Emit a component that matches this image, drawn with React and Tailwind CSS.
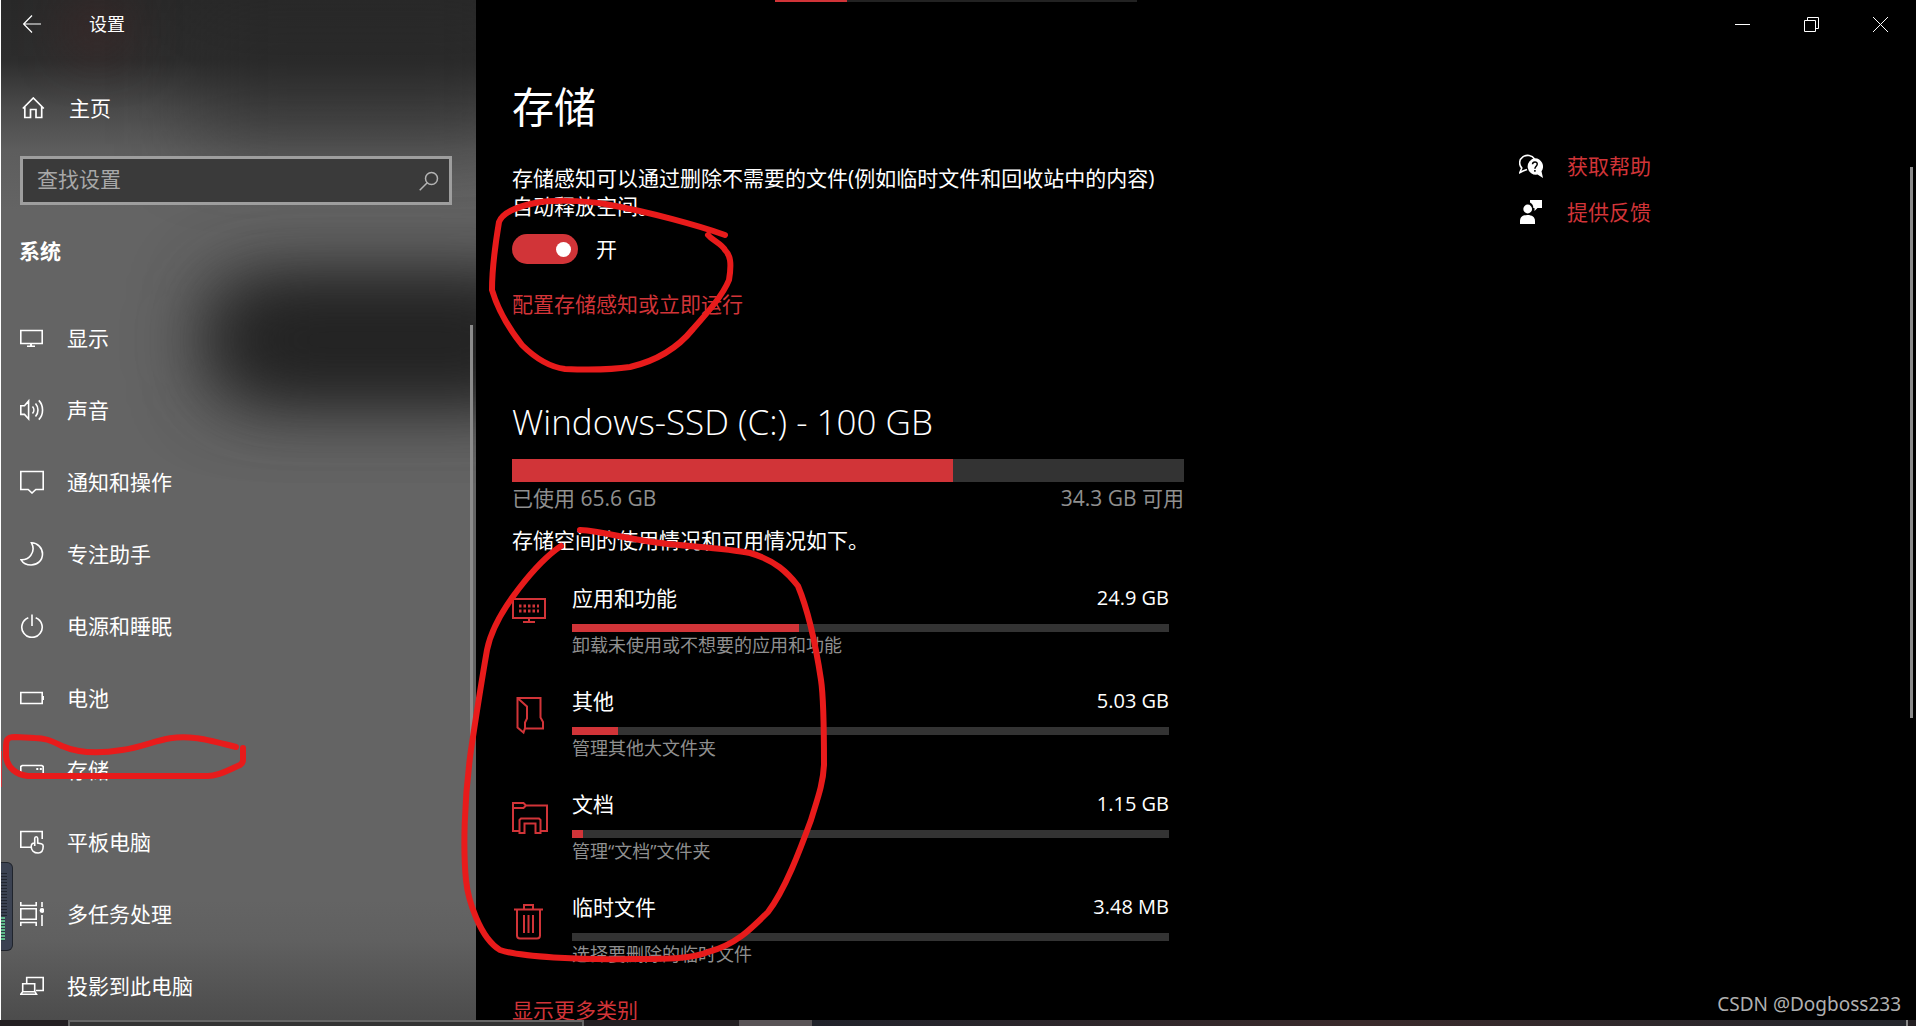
import React from 'react';

const RED = '#d13438';

const NavIcon = ({ children }) => (
  <svg width="24" height="24" viewBox="0 0 24 24" fill="none" stroke="currentColor" strokeWidth="1.6" className="shrink-0" aria-hidden="true">
    {children}
  </svg>
);

const navItems = [
  {
    name: '显示',
    icon: (
      <>
        <path d="M.8 4.500h21.400v13H.8zM7 20.300h8" />
        <path d="M11 17.700v2.600" strokeWidth="2" />
      </>
    ),
  },
  {
    name: '声音',
    icon: <path d="M.8 7.700h3.700L8.600 3v18l-4.100-4.600H.8zM12.500 8.500c1.800 2 1.800 5 0 7M15.500 5.500c3.300 3.600 3.300 9.400 0 13M18.800 2.400c5 5 5 14.200 0 19.200" />,
  },
  { name: '通知和操作', icon: <path d="M.8 1.500h22.400v18h-7.400L12 23l-3.800-3.500H.8z" /> },
  {
    name: '专注助手',
    icon: <path d="M11.500.8c6 .2 11 5 11 11.200 0 6.500-5 11-11.400 11-4.300 0-8-1.800-10-5.200 4.300.2 7.300-1.200 9.600-4.200 2.700-3.600 3-8.600.8-12.800z" />,
  },
  { name: '电源和睡眠', icon: <path d="M12 .5v11.500M8.300 3.700a10.200 10.200 0 1 0 7.400 0" /> },
  {
    name: '电池',
    icon: (
      <>
        <path d="M.8 6.500h21.400v11H.8z" />
        <path d="M23.300 10v4" />
      </>
    ),
  },
  {
    name: '存储',
    icon: (
      <>
        <path d="M.8 17V8.500l1.400-1h19.600l1.400 1V17z" />
        <path d="M16.300 11h2M19.800 11h2" strokeWidth="2" />
      </>
    ),
  },
  {
    name: '平板电脑',
    icon: (
      <>
        <path d="M11 17.300H.8V1.500h21.400V9" />
        <path d="M14.700 16V8.500c0-2.300 3-2.300 3 0V13l3.500.7c1.500.3 2 1 2 2.300 0 4.500-1.700 7-5 7-4.500 0-7-3-7-6.500 0-2.500 1-3.500 3.500-3.500" />
      </>
    ),
  },
  {
    name: '多任务处理',
    icon: (
      <>
        <path d="M.8 0v3.500h15.400V0M.8 6.700h15.400v10.600H.8zM.8 24v-3.500h15.400V24M22 0v5M22 13v11" />
        <circle cx="22" cy="8.500" r="2.400" fill="currentColor" stroke="none" />
      </>
    ),
  },
  {
    name: '投影到此电脑',
    icon: <path d="M6.700 9.500V3.500h16.500v13H16M2.700 9.700h12v8h-12zM.8 20.300l1.800-2.600h12.400l1.500 2.600z" />,
  },
];

const categories = [
  {
    name: '应用和功能',
    size: '24.9 GB',
    hint: '卸载未使用或不想要的应用和功能',
    percent: 38,
    icon: (
      <>
        <path d="M1 5h32v19H1zM11 28h12M17 24v4" />
        <path d="M7 12h20M7 17h20" strokeWidth="3" strokeDasharray="2.500 2" />
      </>
    ),
  },
  {
    name: '其他',
    size: '5.03 GB',
    hint: '管理其他大文件夹',
    percent: 7.7,
    icon: <path d="M5.500 1h23v19.500l2.500 4.500v6.500H13M5.500 1v29.500l6 5 1.500-4.500v-5.500l2-4v-12z" />,
  },
  {
    name: '文档',
    size: '1.15 GB',
    hint: '管理“文档”文件夹',
    percent: 1.9,
    icon: (
      <>
        <path d="M7.500 31H1V3h10.500l2.500 2.500h21V31h-6.500M1 8h10.500L14 5.500" />
        <path d="M7.500 33V20l1.500-1.500h18l1.500 1.500v13h-5V23.500h-11V33z" />
      </>
    ),
  },
  {
    name: '临时文件',
    size: '3.48 MB',
    hint: '选择要删除的临时文件',
    percent: 0,
    icon: <path d="M2 6.500h29M5 6.500v26q0 3 3 3h17q3 0 3-3v-26M12 6V2h9v4M12 12v18M16.500 12v18M21 12v18" />,
  },
];

const Sidebar = () => (
  <aside className="relative w-[476px] shrink-0 overflow-hidden border-l border-white bg-[#636363]">
    {/* Acrylic backdrop */}
    <div className="absolute inset-0 bg-[linear-gradient(#292929_0,#2d2d2d_60px,#4a4a4a_108px,#5d5d5d_150px,#646464_210px,#646464_900px,#606060_940px,#4c4c4c_100%)]" />
    <div className="absolute -right-10 top-0 h-36 w-80 bg-[#262626]/50 blur-2xl" />
    <div className="absolute -right-16 top-[292px] h-24 w-[326px] rounded-3xl bg-[#1c1c1c] blur-2xl" />
    <div className="absolute -right-16 top-[292px] h-24 w-[310px] rounded-3xl bg-[#222] blur-2xl" />
    <div className="absolute left-16 top-0 h-14 w-16 bg-[#4a2525]/40 blur-xl" />

    <div className="relative">
      <header className="flex h-12 items-center pl-[22px]">
        <button type="button" aria-label="返回">
          <svg width="18" height="18" viewBox="0 0 18 18" fill="none" stroke="currentColor" strokeWidth="1.200">
            <path d="M9 .5.7 9 9 17.500M.7 9H18" />
          </svg>
        </button>
        <span className="ml-12 text-lg leading-6">设置</span>
      </header>

      <a href="#home" className="mt-9 flex h-12 items-center gap-6 pl-[21px]">
        <svg width="23" height="22" viewBox="0 0 23 22" fill="none" stroke="currentColor" strokeWidth="1.700" aria-hidden="true">
          <path d="M.8 11.500 11.300 1l10.500 10.500M2.800 9.800v10.700h5.700v-8h5.500v8h5.700V9.800" />
        </svg>
        <span>主页</span>
      </a>

      <label className="ml-[19px] mt-6 flex h-[49px] w-[432px] items-center border-[3px] border-[#9e9e9e] bg-[#3a3a3a] pl-3.5 pr-2.5">
        <input type="text" placeholder="查找设置" aria-label="查找设置" className="min-w-0 flex-1 bg-transparent pb-1 outline-none placeholder:text-[#a8a8a8]" />
        <svg width="20" height="20" viewBox="0 0 20 20" fill="none" stroke="#b4b4b4" strokeWidth="1.500" aria-hidden="true">
          <circle cx="12.500" cy="7.500" r="6" />
          <path d="M8.200 11.800.7 19.300" />
        </svg>
      </label>

      <h2 className="ml-[18px] mt-8 font-bold">系统</h2>

      <nav className="mt-[37px]">
        {navItems.map(item => (
          <a key={item.name} href={`#${item.name}`} className="flex h-[72px] items-center gap-[23px] pl-[19px]">
            <NavIcon>{item.icon}</NavIcon>
            <span>{item.name}</span>
          </a>
        ))}
      </nav>
    </div>

    <div className="absolute left-0 top-[751px] h-9 w-px bg-[#d13438]" />
    <div className="absolute right-[3px] top-[325px] h-[426px] w-[3px] bg-[#8c8c8c]" />

    {/* Floating level meter docked to the screen edge */}
    <div className="absolute left-0 top-[862px] h-[89px] w-3 rounded-r-md border border-l-0 border-[#20242c] bg-[#3b4252]">
      <div className="mt-2.5 h-11 w-1.5 bg-[repeating-linear-gradient(#20252f_0_1px,#3b4252_1px_3px)]" />
      <div className="h-6 w-1 bg-[repeating-linear-gradient(#5fb88a_0_2px,#2c3a44_2px_3px)]" />
    </div>
  </aside>
);

const WindowControls = () => (
  <div className="absolute right-px top-0 flex">
    <button type="button" aria-label="最小化" className="flex h-12 w-[69px] items-center justify-center">
      <svg width="15" height="15" viewBox="0 0 15 15" stroke="currentColor"><path d="M0 7.500h15" /></svg>
    </button>
    <button type="button" aria-label="还原" className="flex h-12 w-[69px] items-center justify-center">
      <svg width="15" height="15" viewBox="0 0 15 15" fill="none" stroke="currentColor"><path d="M.5 3.500h11v11H.5zM3.500 3.500v-3h11v11h-3" /></svg>
    </button>
    <button type="button" aria-label="关闭" className="flex h-12 w-[69px] items-center justify-center">
      <svg width="15" height="15" viewBox="0 0 15 15" stroke="currentColor"><path d="m0 0 15 15M15 0 0 15" /></svg>
    </button>
  </div>
);

const StorageContent = () => (
  <div className="w-[672px] shrink-0">
    <h1 className="text-[42px] leading-[56px]">存储</h1>
    <p className="mt-[29px] max-w-[650px]">
      存储感知可以通过删除不需要的文件(例如临时文件和回收站中的内容)自动释放空间。
    </p>

    <label className="mt-3.5 flex h-[30px] items-center">
      <input type="checkbox" role="switch" defaultChecked className="peer sr-only" />
      <span className="flex h-[30px] w-[66px] items-center justify-end rounded-full bg-[#d13438] pr-[7px]">
        <span className="size-[15px] rounded-full bg-white" />
      </span>
      <span className="ml-[18px]">开</span>
    </label>

    <a href="#configure" className="mt-[26px] block w-fit text-[#d13438]">配置存储感知或立即运行</a>

    <h2 className="mt-20 text-[35px] leading-[48px] font-light">Windows-SSD (C:) - 100 GB</h2>
    <div className="mt-[13px] h-[23px] bg-[#333]">
      <div className="h-full w-[441px] bg-[#d13438]" />
    </div>
    <div className="mt-0.5 flex justify-between text-[#8f8f8f]">
      <span>已使用 65.6 GB</span>
      <span>34.3 GB 可用</span>
    </div>
    <p className="mt-3.5">存储空间的使用情况和可用情况如下。</p>

    <ul className="mt-[30px]">
      {categories.map(item => (
        <li key={item.name} className="flex h-[103px]">
          <svg width="36" height="38" viewBox="0 0 36 38" fill="none" stroke={RED} strokeWidth="2" className="mt-2.5 shrink-0" aria-hidden="true">
            {item.icon}
          </svg>
          <div className="ml-6 mr-[15px] flex-1">
            <div className="flex justify-between">
              <span>{item.name}</span>
              <span className="text-xl leading-7">{item.size}</span>
            </div>
            <div className="mt-3 h-2 bg-[#333]">
              <div className="h-full bg-[#d13438]" style={{ width: `${item.percent}%` }} />
            </div>
            <p className="mt-px text-lg leading-6 text-[#8f8f8f]">{item.hint}</p>
          </div>
        </li>
      ))}
    </ul>

    <a href="#more" className="block w-fit text-[#d13438]">显示更多类别</a>
  </div>
);

const HelpLinks = () => (
  <div className="mt-[73px] w-[397px] space-y-[18px] text-[#d13438]">
    <a href="#help" className="flex items-center gap-6">
      <svg width="24" height="24" viewBox="0 0 24 24" aria-hidden="true">
        <path d="M8 15.500 4 17 .8 18.700 2.800 14A8 7.500 0 1 1 15.500 5" fill="none" stroke="#fff" strokeWidth="1.600" />
        <path d="M16 4.200a8.300 8.300 0 0 1 6.500 13L24 24l-5.500-3.400A8.300 8.300 0 1 1 16 4.200z" fill="#fff" />
        <path d="M13.500 10.300c.2-3.300 5-3 4.700 0-.2 2-2.200 2-2.300 4.500M15.900 16v1.800" fill="none" stroke="#000" strokeWidth="1.500" />
      </svg>
      获取帮助
    </a>
    <a href="#feedback" className="flex items-center gap-6">
      <svg width="24" height="24" viewBox="0 0 24 24" fill="#fff" aria-hidden="true">
        <path d="M11 0h12v8h-4.500L15.500 11V8h-1.200A6 6 0 0 0 11 2.500z" />
        <circle cx="8.700" cy="9" r="4.400" />
        <path d="M1 24v-3c0-4 3-6 7.500-6s7.500 2 7.500 6v3z" />
      </svg>
      提供反馈
    </a>
  </div>
);

/* Hand-drawn red pen marks laid over the window */
const PenMarks = () => (
  <svg width="900" height="1020" viewBox="0 0 900 1020" fill="none" stroke="#e81b1b" strokeWidth="6" strokeLinecap="round" strokeLinejoin="round" className="pointer-events-none absolute left-0 top-0" aria-hidden="true">
    <path d="M236 747C220 743 206 739 195 738C165 734 150 746 122 750C98 754 78 753 62 746C50 740 44 738 35 738L15 737C6 737 6 741 6 748V756C7 768 17 775 28 776H208C220 776 230 769 240 765Q243 763 243 760V748" />
    <path d="M725 235C700 226 650 212 605 204C580 200 550 200 535 203C520 206 503 212 499 222C496 240 492 265 492 290C498 310 510 330 522 345C535 358 550 367 565 369C590 370 610 370 630 367C660 360 680 345 693 329C708 312 723 295 729 280C732 262 730 255 725 250C722 244 712 240 708 235" />
    <path d="M580 530C600 531 620 537 640 540C670 546 720 547 750 553C775 560 788 573 798 586C808 610 815 640 821 680C824 700 824 740 824 765C823 785 817 800 811 820C800 850 785 890 768 912C750 930 735 945 708 952C690 960 655 959 630 959C580 960 520 957 500 950C480 938 468 900 466 880C463 850 464 800 471 750C477 710 480 690 487 650C495 610 540 560 561 546" />
  </svg>
);

const App = () => (
  <div className="relative flex h-screen flex-col overflow-hidden bg-black font-['Open_Sans','Noto_Sans_CJK_SC',sans-serif] text-[21px] leading-7 text-white">
    <div className="relative flex min-h-0 flex-1">
      <Sidebar />
      <main className="relative flex min-w-0 flex-1 justify-between overflow-hidden pl-9 pt-[79px]">
        <StorageContent />
        <HelpLinks />
        <div className="absolute left-[299px] top-0 h-0.5 w-[362px] bg-[#222]">
          <div className="h-full w-[72px] bg-[#d13438]" />
        </div>
        <WindowControls />
        <div className="absolute right-[3px] top-[167px] h-[551px] w-[3px] bg-[#8a8a8a]" />
      </main>
      <PenMarks />
    </div>

    {/* Sliver of the taskbar */}
    <footer className="flex h-1.5 shrink-0 bg-[#231f22]">
      <div className="ml-[68px] h-full w-[516px] border-x-2 border-t-2 border-[#666] bg-[#333]" />
      <div className="ml-[155px] h-full w-[73px] bg-[#595456]" />
      <div className="flex-1 bg-linear-to-r from-[#20222a] via-[#3a2a2b] to-[#24262c]" />
      <div className="mr-2 w-0.5 bg-[#888]" />
    </footer>

    <span className="absolute bottom-2 right-[15px] font-['Noto_Sans'] text-[19px] leading-7 text-[#b0b0b0]">CSDN @Dogboss233</span>
  </div>
);

export default App;
